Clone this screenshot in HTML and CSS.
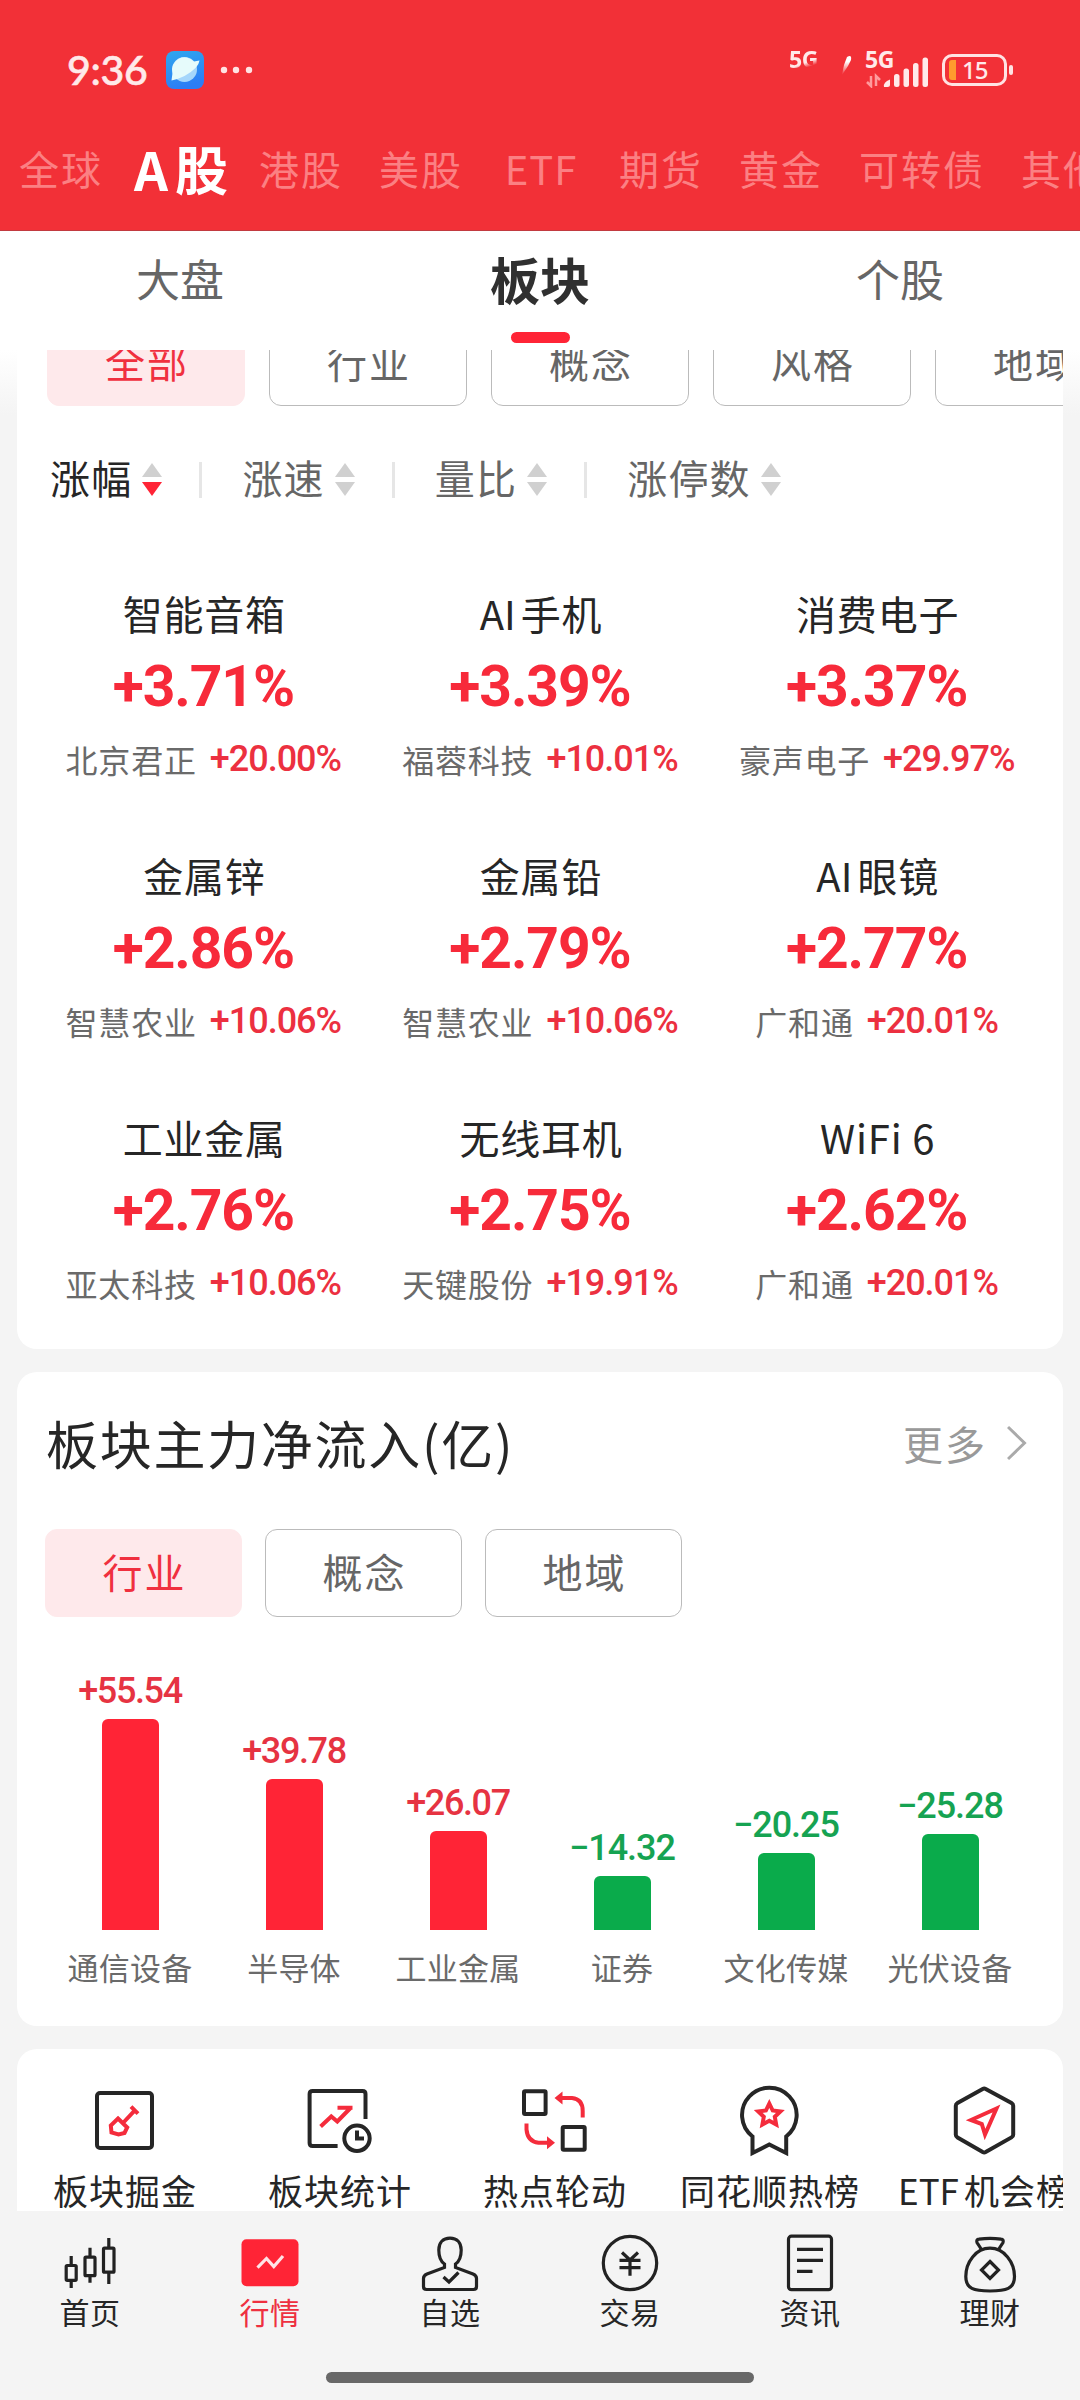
FILE: index.html
```html
<!DOCTYPE html>
<html lang="zh-CN">
<head>
    <meta charset="UTF-8">
    <meta name="viewport" content="width=device-width, initial-scale=1.0">
    <title>行情 - 板块</title>
    <link rel="stylesheet" href="styles.css">
</head>
<body>
    <div class="app">
        <header class="header">
            <div class="status-bar">
                <span class="time">9:36</span>
                <svg class="app-icon" width="38" height="38" viewBox="0 0 38 38">
                    <defs>
                        <linearGradient id="appBg" x1="0" y1="0" x2="0.3" y2="1">
                            <stop offset="0" stop-color="#2fa8ee"/>
                            <stop offset="1" stop-color="#2c7df5"/>
                        </linearGradient>
                    </defs>
                    <rect width="38" height="38" rx="8" fill="url(#appBg)"/>
                    <circle cx="18.500" cy="18.500" r="12.500" fill="#a5d6fb"/>
                    <path d="M5.500 29.500L6.500 22A12.500 12.500 0 0 1 28 10.500L33.500 9.500Q33 13 30 16.500 20 26.500 5.500 29.500z" fill="#e6fbfb"/>
                </svg>
                <svg class="more-dots" width="34" height="8" viewBox="0 0 34 8" fill="#ffe3e3">
                    <circle cx="4" cy="4" r="3.200"/>
                    <circle cx="16" cy="4" r="3.200"/>
                    <circle cx="29" cy="4" r="3.200"/>
                </svg>
                <div class="signals">
                    <span class="net">5G</span>
                    <svg class="sim-faded" width="36" height="38" viewBox="0 0 36 38">
                        <defs>
                            <linearGradient id="fade" x1="0" y1="0" x2="0" y2="1">
                                <stop offset="0.300" stop-color="#fff"/>
                                <stop offset="1" stop-color="#fff" stop-opacity="0"/>
                            </linearGradient>
                        </defs>
                        <path d="M30 6 Q35 3 34 9 L31 15 L25 24 L27 14z" fill="url(#fade)"/>
                    </svg>
                    <span class="net second">5G</span>
                    <svg class="bars" width="66" height="36" viewBox="0 0 66 36">
                        <g stroke="#ff9a9c" stroke-width="2.500" fill="none">
                            <path d="M6 24v10l-4-4M11 34V24l4 4"/>
                        </g>
                        <g fill="#ffeaea">
                            <path d="M19 35 q-1-5 6-7.500 v5 q0 2.500-2.500 2.500z"/>
                            <rect x="29" y="22" width="5.500" height="13" rx="2.500"/>
                            <rect x="38.500" y="16.500" width="5.500" height="18.500" rx="2.500"/>
                            <rect x="48" y="11" width="5.500" height="24" rx="2.500"/>
                            <rect x="57.500" y="5.500" width="5.500" height="29.500" rx="2.500"/>
                        </g>
                    </svg>
                    <div class="battery"><i class="charge"></i><span>15</span></div>
                </div>
            </div>
            <nav class="market-tabs">
                <span>全球</span>
                <span class="active"><i>A</i>股</span>
                <span>港股</span>
                <span>美股</span>
                <span class="etf">ETF</span>
                <span>期货</span>
                <span>黄金</span>
                <span class="wide">可转债</span>
                <span>其他</span>
            </nav>
        </header>

        <nav class="sub-tabs">
            <span>大盘</span>
            <span class="active">板块</span>
            <span>个股</span>
        </nav>

        <main class="content">
            <section class="card rank-card">
                <div class="chips">
                    <span class="chip active">全部</span>
                    <span class="chip">行业</span>
                    <span class="chip">概念</span>
                    <span class="chip">风格</span>
                    <span class="chip">地域</span>
                </div>
                <div class="sorts">
                    <div class="sort active">涨幅<i class="arrows"></i></div>
                    <div class="sort">涨速<i class="arrows"></i></div>
                    <div class="sort">量比<i class="arrows"></i></div>
                    <div class="sort">涨停数<i class="arrows"></i></div>
                </div>
                <div class="rank-grid">
                    <div class="rank">
                        <div class="name">智能音箱</div>
                        <div class="pct">+3.71%</div>
                        <div class="lead">北京君正<b>+20.00%</b></div>
                    </div>
                    <div class="rank">
                        <div class="name"><span class="en">AI</span>手机</div>
                        <div class="pct">+3.39%</div>
                        <div class="lead">福蓉科技<b>+10.01%</b></div>
                    </div>
                    <div class="rank">
                        <div class="name">消费电子</div>
                        <div class="pct">+3.37%</div>
                        <div class="lead">豪声电子<b>+29.97%</b></div>
                    </div>
                    <div class="rank">
                        <div class="name">金属锌</div>
                        <div class="pct">+2.86%</div>
                        <div class="lead">智慧农业<b>+10.06%</b></div>
                    </div>
                    <div class="rank">
                        <div class="name">金属铅</div>
                        <div class="pct">+2.79%</div>
                        <div class="lead">智慧农业<b>+10.06%</b></div>
                    </div>
                    <div class="rank">
                        <div class="name"><span class="en">AI</span>眼镜</div>
                        <div class="pct">+2.77%</div>
                        <div class="lead">广和通<b>+20.01%</b></div>
                    </div>
                    <div class="rank">
                        <div class="name">工业金属</div>
                        <div class="pct">+2.76%</div>
                        <div class="lead">亚太科技<b>+10.06%</b></div>
                    </div>
                    <div class="rank">
                        <div class="name">无线耳机</div>
                        <div class="pct">+2.75%</div>
                        <div class="lead">天键股份<b>+19.91%</b></div>
                    </div>
                    <div class="rank">
                        <div class="name">WiFi 6</div>
                        <div class="pct">+2.62%</div>
                        <div class="lead">广和通<b>+20.01%</b></div>
                    </div>
                </div>
            </section>

            <section class="card flow-card">
                <div class="card-head">
                    <h2>板块主力净流入(亿)</h2>
                    <a class="more">更多
                        <svg width="20" height="36" viewBox="0 0 20 36" fill="none" stroke="#aaa" stroke-width="3"><path d="M1 2l16.500 16L1 34"/></svg>
                    </a>
                </div>
                <div class="chips">
                    <span class="chip active">行业</span>
                    <span class="chip">概念</span>
                    <span class="chip">地域</span>
                </div>
                <div class="chart">
                    <div class="col up"><b>+55.54</b><i style="height: 211.5px"></i><span>通信设备</span></div>
                    <div class="col up"><b>+39.78</b><i style="height: 151.5px"></i><span>半导体</span></div>
                    <div class="col up"><b>+26.07</b><i style="height: 99.3px"></i><span>工业金属</span></div>
                    <div class="col down"><b>−14.32</b><i style="height: 54.5px"></i><span>证券</span></div>
                    <div class="col down"><b>−20.25</b><i style="height: 77.1px"></i><span>文化传媒</span></div>
                    <div class="col down"><b>−25.28</b><i style="height: 96.3px"></i><span>光伏设备</span></div>
                </div>
            </section>

            <section class="card tools-card">
                <div class="tool">
                    <svg viewBox="0 0 76 76">
                        <rect x="11" y="9" width="55" height="55" rx="3"/>
                        <path class="red" d="M32 34.500L41.200 43.500 38.500 49 32.500 50.500 25.500 48.500 24.800 41.500zM36.500 39.500L48.600 26.700M45 22.700l7 7"/>
                    </svg>
                    <span>板块掘金</span>
                </div>
                <div class="tool">
                    <svg viewBox="0 0 76 76">
                        <path d="M64.500 35V10q0-3-3-3H11.600q-3 0-3 3v49q0 3 3 3h25"/>
                        <circle cx="56" cy="54.300" r="12.700"/>
                        <path d="M56 46.500v8h7"/>
                        <path class="red" d="M19.600 42.500l10.700-10 6 5L49.500 24M36.500 23.700h15"/>
                    </svg>
                    <span>板块统计</span>
                </div>
                <div class="tool">
                    <svg viewBox="0 0 76 76">
                        <rect x="8" y="7.300" width="21.600" height="22.700" rx="1"/>
                        <rect x="46.700" y="43" width="22" height="22.700" rx="1"/>
                        <path class="red" d="M46 14h10q10.700 1 10.700 13v6.500M10.500 39.500v6q1 12 12 13.200h9"/>
                        <path class="red-fill" d="M38.500 14l8-6.500v13zM39 58.700l-8-6.500v13z"/>
                    </svg>
                    <span>热点轮动</span>
                </div>
                <div class="tool">
                    <svg viewBox="0 0 76 76">
                        <path d="M21.500 52.500A27.300 27.300 0 1 1 55.200 52.500V69L38.300 60.500 21.500 69z"/>
                        <path class="red" d="M38.300 19.500L41.700 26.500 49.400 27.400 43.800 32.800 45.200 40.500 38.300 36.800 31.400 40.500 32.800 32.800 27.200 27.400 34.900 26.500z"/>
                    </svg>
                    <span>同花顺热榜</span>
                </div>
                <div class="tool">
                    <svg viewBox="0 0 76 76">
                        <path d="M36.700 5q1.500-.8 3 0L65.500 19q1.700 1 1.700 2.700v29q0 1.700-1.700 2.700L39.700 68q-1.500.8-3 0L11.500 53.400q-1.700-1-1.700-2.700v-29q0-1.700 1.700-2.700z"/>
                        <path class="red" d="M50.500 24.500L25 36l10.800 4L39 50.500z"/>
                    </svg>
                    <span><span class="en">ETF</span>机会榜</span>
                </div>
            </section>
        </main>

        <footer class="tab-bar">
            <div class="tab">
                <svg viewBox="0 0 60 64">
                    <rect x="6.200" y="33.500" width="10" height="14.800" rx="1"/>
                    <rect x="25" y="25.200" width="10" height="18.500" rx="1"/>
                    <rect x="43.500" y="16.200" width="10.500" height="24" rx="1"/>
                    <path d="M11.200 24v9.500M11.200 48.300V56M30 15.700v9.500M30 43.700v7M48.800 6v10M48.800 40.200V52"/>
                </svg>
                <span>首页</span>
            </div>
            <div class="tab active">
                <svg viewBox="0 0 60 64">
                    <rect class="solid" x="1.500" y="7.300" width="57" height="47" rx="5"/>
                    <path class="white" d="M17.500 35.700l9-9.200 7.300 8L43 24"/>
                </svg>
                <span>行情</span>
            </div>
            <div class="tab">
                <svg viewBox="0 0 60 64">
                    <path d="M24.500 35.500V32C20 29 18.800 23 18.800 18 18.800 10.500 23 6.200 30 6.200S41.200 10.500 41.200 18C41.200 23 40 29 35.500 32v3.500L53 42q3.500 1.500 3.500 4.500v8q0 3-3 3h-47q-3 0-3-3v-8q0-3 3.500-4.500z"/>
                    <path d="M23.500 45l5.500 5 9.500-9.500"/>
                </svg>
                <span>自选</span>
            </div>
            <div class="tab">
                <svg viewBox="0 0 60 64">
                    <circle cx="30" cy="31" r="26.700"/>
                    <path d="M22 20.500l8 7.500 8-7.500M19.500 28.300h21M19.500 35.700h21M30 28v15.700"/>
                </svg>
                <span>交易</span>
            </div>
            <div class="tab">
                <svg viewBox="0 0 60 64">
                    <rect x="8.500" y="4.200" width="43" height="53.500" rx="3"/>
                    <path d="M17 17.300h26M17 28.300h26M17 39.300h15.500"/>
                </svg>
                <span>资讯</span>
            </div>
            <div class="tab">
                <svg viewBox="0 0 60 64">
                    <path d="M21.500 17.500L17 10.500Q16 7.500 19 7.200Q30 5.500 41 7.200Q44 7.500 43 10.500L38.500 17.500"/>
                    <path d="M30 16.200C16 16.200 5.800 30 5.800 44.500 5.800 57 14 59 30 59S54.500 57 54.500 44.500C54.500 30 44 16.200 30 16.200z"/>
                    <path d="M30 29.500l8.500 8.500-8.500 8.500-8.500-8.500z"/>
                </svg>
                <span>理财</span>
            </div>
            <div class="home-bar"></div>
        </footer>
    </div>
</body>
</html>
```

FILE: styles.css
```css
* {
    box-sizing: border-box;
}

body {
    margin: 0;
    font-family: "Noto Sans CJK SC", "Noto Sans", sans-serif;
    color: #262626;
    background: #f4f4f4;
}

.app {
    display: flex;
    flex-direction: column;
    width: 1080px;
    height: 2400px;
    overflow: hidden;
}

/* Header */
.header {
    height: 231px;
    background: #f23037;
    border-bottom: 1px solid #c23a40;
    overflow: hidden;
}

.status-bar {
    display: flex;
    align-items: center;
    height: 140px;
    padding: 0 67px;
    color: #ffe9e9;
}

.time {
    width: 99px;
    font: 500 41px/44px Lato, sans-serif;
    letter-spacing: -0.300px;
    -webkit-text-stroke: 0.600px #ffe9e9;
}

.more-dots {
    margin-left: 16px;
}

.signals {
    display: flex;
    align-items: center;
    margin-left: auto;
}

.net {
    width: 30px;
    margin-top: -22px;
    font: 700 23px/24px "Open Sans", sans-serif;
    letter-spacing: -0.500px;
    white-space: nowrap;
}

.net:first-child {
    -webkit-mask-image: linear-gradient(160deg, #000 62%, transparent 78%);
    mask-image: linear-gradient(160deg, #000 62%, transparent 78%);
}

.sim-faded {
    margin: 0 12px 0 -2px;
}

.second {
    width: 0;
}

.bars {
    margin-right: 11px;
}

.battery {
    display: flex;
    align-items: center;
    position: relative;
    width: 65px;
    height: 32px;
    margin-right: 6px;
    border: 3px solid #ffe3e3;
    border-radius: 10px;
    font: 500 24px/26px "Noto Sans", sans-serif;
    letter-spacing: -1px;
}

.battery::after {
    content: "";
    position: absolute;
    right: -9px;
    top: 8px;
    width: 4px;
    height: 10px;
    border-radius: 2px;
    background: #ffe3e3;
}

.charge {
    width: 7px;
    height: 20px;
    margin: 0 6px 0 4px;
    border-radius: 3px 0 0 3px;
    background: #ff9a2e;
}

.market-tabs {
    display: flex;
    gap: 36px;
    padding-left: 19px;
    line-height: 60px;
    font-size: 40px;
    letter-spacing: 2px;
    color: #fb8083;
    white-space: nowrap;
}

.market-tabs span {
    display: flex;
    justify-content: center;
    flex: 0 0 84px;
    min-width: 0;
    margin-top: -2px;
}

.market-tabs .wide {
    flex-basis: 126px;
}

.market-tabs .etf {
    letter-spacing: 1px;
}

.market-tabs .active {
    font-size: 53px;
    font-weight: 700;
    letter-spacing: 0;
    color: #fff;
}

.market-tabs i {
    margin-right: 7px;
    font-style: normal;
}

/* 大盘 / 板块 / 个股 */
.sub-tabs {
    display: flex;
    height: 119px;
    background: #fff;
}

.sub-tabs span {
    display: flex;
    flex: 1;
    flex-direction: column;
    align-items: center;
    line-height: 95px;
    font-size: 44px;
    color: #666;
}

.sub-tabs .active {
    font-size: 50px;
    font-weight: 700;
    color: #303030;
}

.sub-tabs .active::after {
    content: "";
    width: 59px;
    height: 11px;
    margin-top: 6px;
    border-radius: 6px;
    background: #ff2436;
}

/* Cards */
.content {
    flex: 1;
    min-height: 0;
    padding: 0 17px;
    overflow: hidden;
    background: linear-gradient(#fff, #f4f4f4 65px);
}

.card {
    margin-bottom: 23px;
    border-radius: 20px;
    background: #fff;
    overflow: hidden;
}

.chips {
    display: flex;
    gap: 24px;
}

.chip {
    display: flex;
    flex: 0 0 198px;
    justify-content: center;
    height: 88px;
    padding-left: 2px;
    border: 1px solid #bbb;
    border-radius: 12px;
    line-height: 84px;
    font-size: 40px;
    letter-spacing: 2px;
    color: #666;
}

.chip.active {
    border-color: #fee9eb;
    background: #fee9eb;
    color: #f0303f;
}

.rank-card {
    height: 1059px;
    margin-top: -60px;
    padding: 28px 0 0 30px;
}

.sorts {
    display: flex;
    margin-top: 43px;
    padding-left: 3px;
    line-height: 56px;
}

.sort {
    display: flex;
    align-items: center;
    margin-right: 40px;
    font-size: 40px;
    letter-spacing: 1.200px;
    color: #666;
}

.sort.active {
    color: #262626;
}

.sort:not(:last-child)::after {
    content: "";
    width: 3px;
    height: 36px;
    margin-left: 37px;
    margin-top: 5px;
    background: #e6e6e6;
}

.arrows {
    display: flex;
    flex-direction: column;
    gap: 5px;
    margin-left: 10px;
    margin-top: 4px;
}

.arrows::before,
.arrows::after {
    content: "";
    border: 10px solid transparent;
}

.arrows::before {
    border-top: 0;
    border-bottom: 14px solid #d0d0d0;
}

.arrows::after {
    border-bottom: 0;
    border-top: 14px solid #d0d0d0;
}

.active .arrows::after {
    border-top-color: #ff2436;
}

.rank-grid {
    display: grid;
    grid-template-columns: repeat(3, 1fr);
    grid-auto-rows: 262px;
    margin: 80px 18px 0 -12px;
    text-align: center;
}

.name {
    padding-left: 2px;
    line-height: 56px;
    font-size: 40px;
    letter-spacing: 0.800px;
}

.en {
    margin-right: 5px;
    letter-spacing: 0;
}

.pct {
    margin-top: 10px;
    font: 700 57px/72px Roboto, sans-serif;
    letter-spacing: -1.100px;
    color: #f72a3a;
}

.lead {
    display: flex;
    justify-content: center;
    align-items: center;
    margin-top: 11px;
    line-height: 48px;
    font-size: 32px;
    letter-spacing: 0.800px;
    color: #6a6a6a;
}

.lead b {
    margin-top: 1px;
    margin-left: 13px;
    font: 500 36px/48px Roboto, sans-serif;
    letter-spacing: -1px;
    color: #ec3040;
}

/* Net inflow */
.flow-card {
    height: 654px;
    padding: 35px 28px 0;
}

.flow-card .chips {
    gap: 23px;
    margin-top: 50px;
}

.flow-card .chip {
    flex-basis: 197px;
    line-height: 82px;
}

.card-head {
    display: flex;
    justify-content: space-between;
    align-items: center;
    height: 72px;
}

h2 {
    margin: 0 0 0 1px;
    line-height: 68px;
    font-size: 52px;
    font-weight: 400;
    letter-spacing: 1.700px;
}

.more {
    display: flex;
    align-items: center;
    gap: 20px;
    margin-right: 8px;
    line-height: 66px;
    font-size: 40px;
    letter-spacing: 2px;
    color: #999;
}

.chart {
    display: flex;
    align-items: flex-end;
    width: 984px;
    height: 334px;
    margin: 40px 0 0 3px;
}

.col {
    display: flex;
    flex: 1;
    flex-direction: column;
    align-items: center;
}

.col b {
    font: 500 36px/44px Roboto, sans-serif;
    letter-spacing: -1.400px;
}

.col i {
    width: 57px;
    margin-top: 6px;
    border-radius: 6px 6px 0 0;
}

.col span {
    margin-top: 13px;
    line-height: 48px;
    font-size: 31px;
    letter-spacing: 0.200px;
    color: #6a6a6a;
}

.up b {
    color: #e63342;
}

.up i {
    background: #ff2436;
}

.down b {
    color: #16a352;
    letter-spacing: -1px;
}

.down i {
    background: #0aab4b;
}

/* Shortcuts */
.tools-card {
    display: flex;
    height: 240px;
    padding-top: 35px;
}

.tool {
    display: flex;
    flex: 0 0 215px;
    flex-direction: column;
    align-items: center;
}

.tool svg {
    width: 76px;
    height: 76px;
    margin-right: 2px;
    fill: none;
    stroke: #262626;
    stroke-width: 4;
}

.tool > span {
    margin-top: 6px;
    margin-left: 1px;
    line-height: 48px;
    font-size: 35px;
    letter-spacing: 1px;
    white-space: nowrap;
}

.tool .red {
    stroke: #f42c3c;
}

.tool .red-fill {
    fill: #f42c3c;
    stroke: none;
}

/* Bottom tab bar */
.tab-bar {
    display: flex;
    position: relative;
    height: 189px;
    padding-top: 21px;
    background: #f4f4f4;
}

.tab {
    display: flex;
    flex: 1;
    flex-direction: column;
    align-items: center;
    line-height: 40px;
    font-size: 30px;
    letter-spacing: 0.500px;
}

.tab svg {
    width: 60px;
    height: 64px;
    fill: none;
    stroke: #222;
    stroke-width: 3.200;
}

.tab span {
    margin-top: -5px;
}

.tab.active {
    color: #ee3040;
}

.tab .solid {
    fill: #ff2436;
    stroke: none;
}

.tab .white {
    stroke: #ffe3e6;
}

.home-bar {
    position: absolute;
    left: 326px;
    bottom: 17px;
    width: 428px;
    height: 11px;
    border-radius: 6px;
    background: #686868;
}
```
